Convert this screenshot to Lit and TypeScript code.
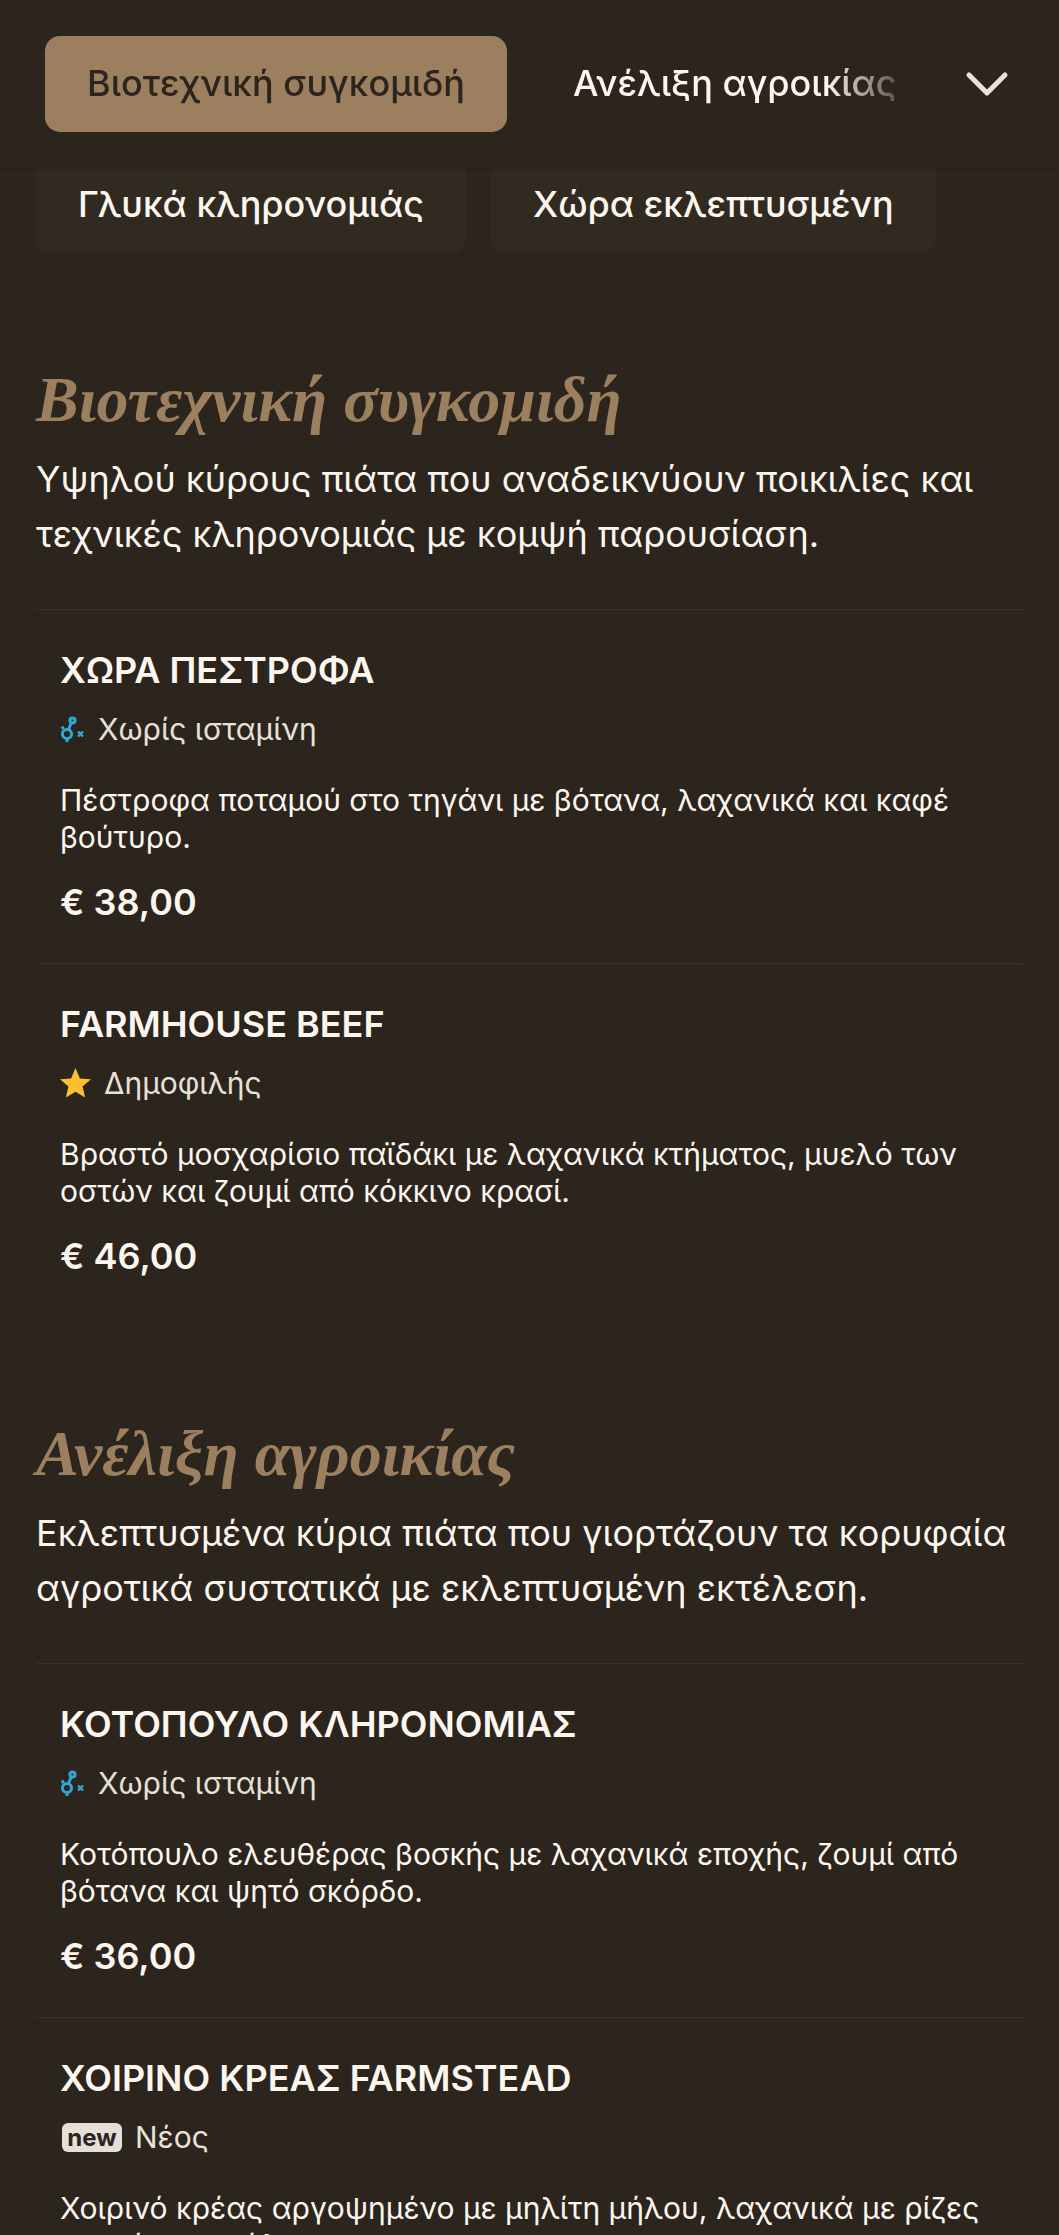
import { LitElement, html, css } from "lit";
import { customElement } from "lit/decorators.js";

type Tag = "hist" | "star" | "new";
interface Item { title: string; tag: Tag; label: string; desc: string; price: string }
interface Section { title: string; sub: string; items: Item[] }

const sections: Section[] = [
  {
    title: "Βιοτεχνική συγκομιδή",
    sub: "Υψηλού κύρους πιάτα που αναδεικνύουν ποικιλίες και τεχνικές κληρονομιάς με κομψή παρουσίαση.",
    items: [
      { title: "ΧΩΡΑ ΠΕΣΤΡΟΦΑ", tag: "hist", label: "Χωρίς ισταμίνη", desc: "Πέστροφα ποταμού στο τηγάνι με βότανα, λαχανικά και καφέ βούτυρο.", price: "€ 38,00" },
      { title: "FARMHOUSE BEEF", tag: "star", label: "Δημοφιλής", desc: "Βραστό μοσχαρίσιο παϊδάκι με λαχανικά κτήματος, μυελό των οστών και ζουμί από κόκκινο κρασί.", price: "€ 46,00" },
    ],
  },
  {
    title: "Ανέλιξη αγροικίας",
    sub: "Εκλεπτυσμένα κύρια πιάτα που γιορτάζουν τα κορυφαία αγροτικά συστατικά με εκλεπτυσμένη εκτέλεση.",
    items: [
      { title: "ΚΟΤΟΠΟΥΛΟ ΚΛΗΡΟΝΟΜΙΑΣ", tag: "hist", label: "Χωρίς ισταμίνη", desc: "Κοτόπουλο ελευθέρας βοσκής με λαχανικά εποχής, ζουμί από βότανα και ψητό σκόρδο.", price: "€ 36,00" },
      { title: "ΧΟΙΡΙΝΟ ΚΡΕΑΣ FARMSTEAD", tag: "new", label: "Νέος", desc: "Χοιρινό κρέας αργοψημένο με μηλίτη μήλου, λαχανικά με ρίζες εποχής και σάλτσα.", price: "€ 34,00" },
    ],
  },
];

@customElement("app-root")
export class AppRoot extends LitElement {
  static styles = css`
    :host {
      display: block;
      position: relative;
      width: 1059px;
      height: 2235px;
      overflow: hidden;
      background: #2c251e;
      color: #fcf6ee;
      font-family: Inter, "Noto Sans", sans-serif;
    }
    .top {
      position: absolute;
      inset: 0 0 auto 0;
      height: 168px;
      background: #2c251e;
      box-shadow: 0 1px 2px rgba(0, 0, 0, 0.1);
      z-index: 2;
      display: flex;
      align-items: flex-start;
      box-sizing: border-box;
      padding: 36px 0 0 45px;
    }
    .scroller {
      width: 850px;
      display: flex;
      gap: 24px;
      overflow: hidden;
      -webkit-mask-image: linear-gradient(to right, #000 0, #000 92%, rgba(0, 0, 0, 0.25) 100%);
      mask-image: linear-gradient(to right, #000 0, #000 92%, rgba(0, 0, 0, 0.25) 100%);
    }
    .pill {
      flex: none;
      height: 96px;
      padding: 0 42px 2px;
      box-sizing: border-box;
      display: flex;
      align-items: center;
      font-size: 36px;
      font-weight: 500;
      border-radius: 15px;
      white-space: nowrap;
    }
    .pill.active { background: #9c7f5f; color: #2c251e; }
    .chev { position: absolute; left: 963px; top: 68px; }
    main { padding: 157px 36px 0; }
    .row2 { display: flex; gap: 25px; }
    .row2 .pill { background: #312a21; }
    section { margin-top: 107px; }
    section + section { margin-top: 97px; }
    h2 {
      margin: 0;
      font-family: "Liberation Serif", serif;
      font-style: italic;
      font-weight: 700;
      font-size: 64px;
      line-height: 80px;
      color: #9c7f5f;
    }
    .sub { margin: 12px 0 0; font-size: 36px; line-height: 55px; }
    .items { margin-top: 47px; }
    .item {
      border-top: 1px solid #38302a;
      padding: 38px 24px 0;
      height: 354px;
      box-sizing: border-box;
    }
    h3 { margin: 0; font-size: 36px; line-height: 44px; font-weight: 600; }
    .tag { display: flex; align-items: center; gap: 13px; margin-top: 15px; height: 44px; font-size: 30px; color: #e8e1d8; }
    .desc { margin: 31px 0 0; font-size: 30px; line-height: 37px; }
    .price { margin-top: 24px; font-size: 36px; line-height: 44px; font-weight: 600; }
    .badge {
      background: #e6dfd7;
      color: #2c251e;
      font-size: 24px;
      font-weight: 700;
      line-height: 29px;
      height: 29px;
      width: 60px;
      margin-left: 2px;
      text-align: center;
      border-radius: 6px;
    }
  `;

  private icon(t: Tag) {
    if (t === "star")
      return html`<svg width="31" height="30" viewBox="0 0 31 30"><path d="M15.5 0l4.4 10.4 11.1.9-8.4 7.3 2.5 11L15.5 23.8 5.9 29.6l2.5-11L0 11.3l11.1-.9z" fill="#fbc02d"/></svg>`;
    if (t === "new") return html`<span class="badge">new</span>`;
    return html`<svg width="25" height="26" viewBox="0 0 25 26" fill="none" stroke="#2fa8d5" stroke-width="3"><circle cx="7" cy="18" r="4.6"/><path d="M8.5 13.5L11 7.5"/><circle cx="12.5" cy="4.5" r="2.6"/><path d="M2 10.5l1.5 2.5M7 23v3"/><path d="M18 15.5l5 5M23 15.5l-5 5" stroke-width="2.4"/></svg>`;
  }

  render() {
    return html`
      <div class="top">
        <div class="scroller">
          <div class="pill active">Βιοτεχνική συγκομιδή</div>
          <div class="pill">Ανέλιξη αγροικίας</div>
          <div class="pill">Γλυκά κληρονομιάς</div>
        </div>
        <svg class="chev" width="48" height="32" viewBox="0 0 48 32" fill="none" stroke="#e8e2da" stroke-width="5" stroke-linecap="round" stroke-linejoin="round"><path d="M6 7l18 18L42 7"/></svg>
      </div>
      <main>
        <div class="row2">
          <div class="pill">Γλυκά κληρονομιάς</div>
          <div class="pill">Χώρα εκλεπτυσμένη</div>
        </div>
        ${sections.map((s) => html`
          <section>
            <h2>${s.title}</h2>
            <p class="sub">${s.sub}</p>
            <div class="items">
              ${s.items.map((i) => html`
                <div class="item">
                  <h3>${i.title}</h3>
                  <div class="tag">${this.icon(i.tag)}<span>${i.label}</span></div>
                  <p class="desc">${i.desc}</p>
                  <div class="price">${i.price}</div>
                </div>`)}
            </div>
          </section>`)}
      </main>
    `;
  }
}
